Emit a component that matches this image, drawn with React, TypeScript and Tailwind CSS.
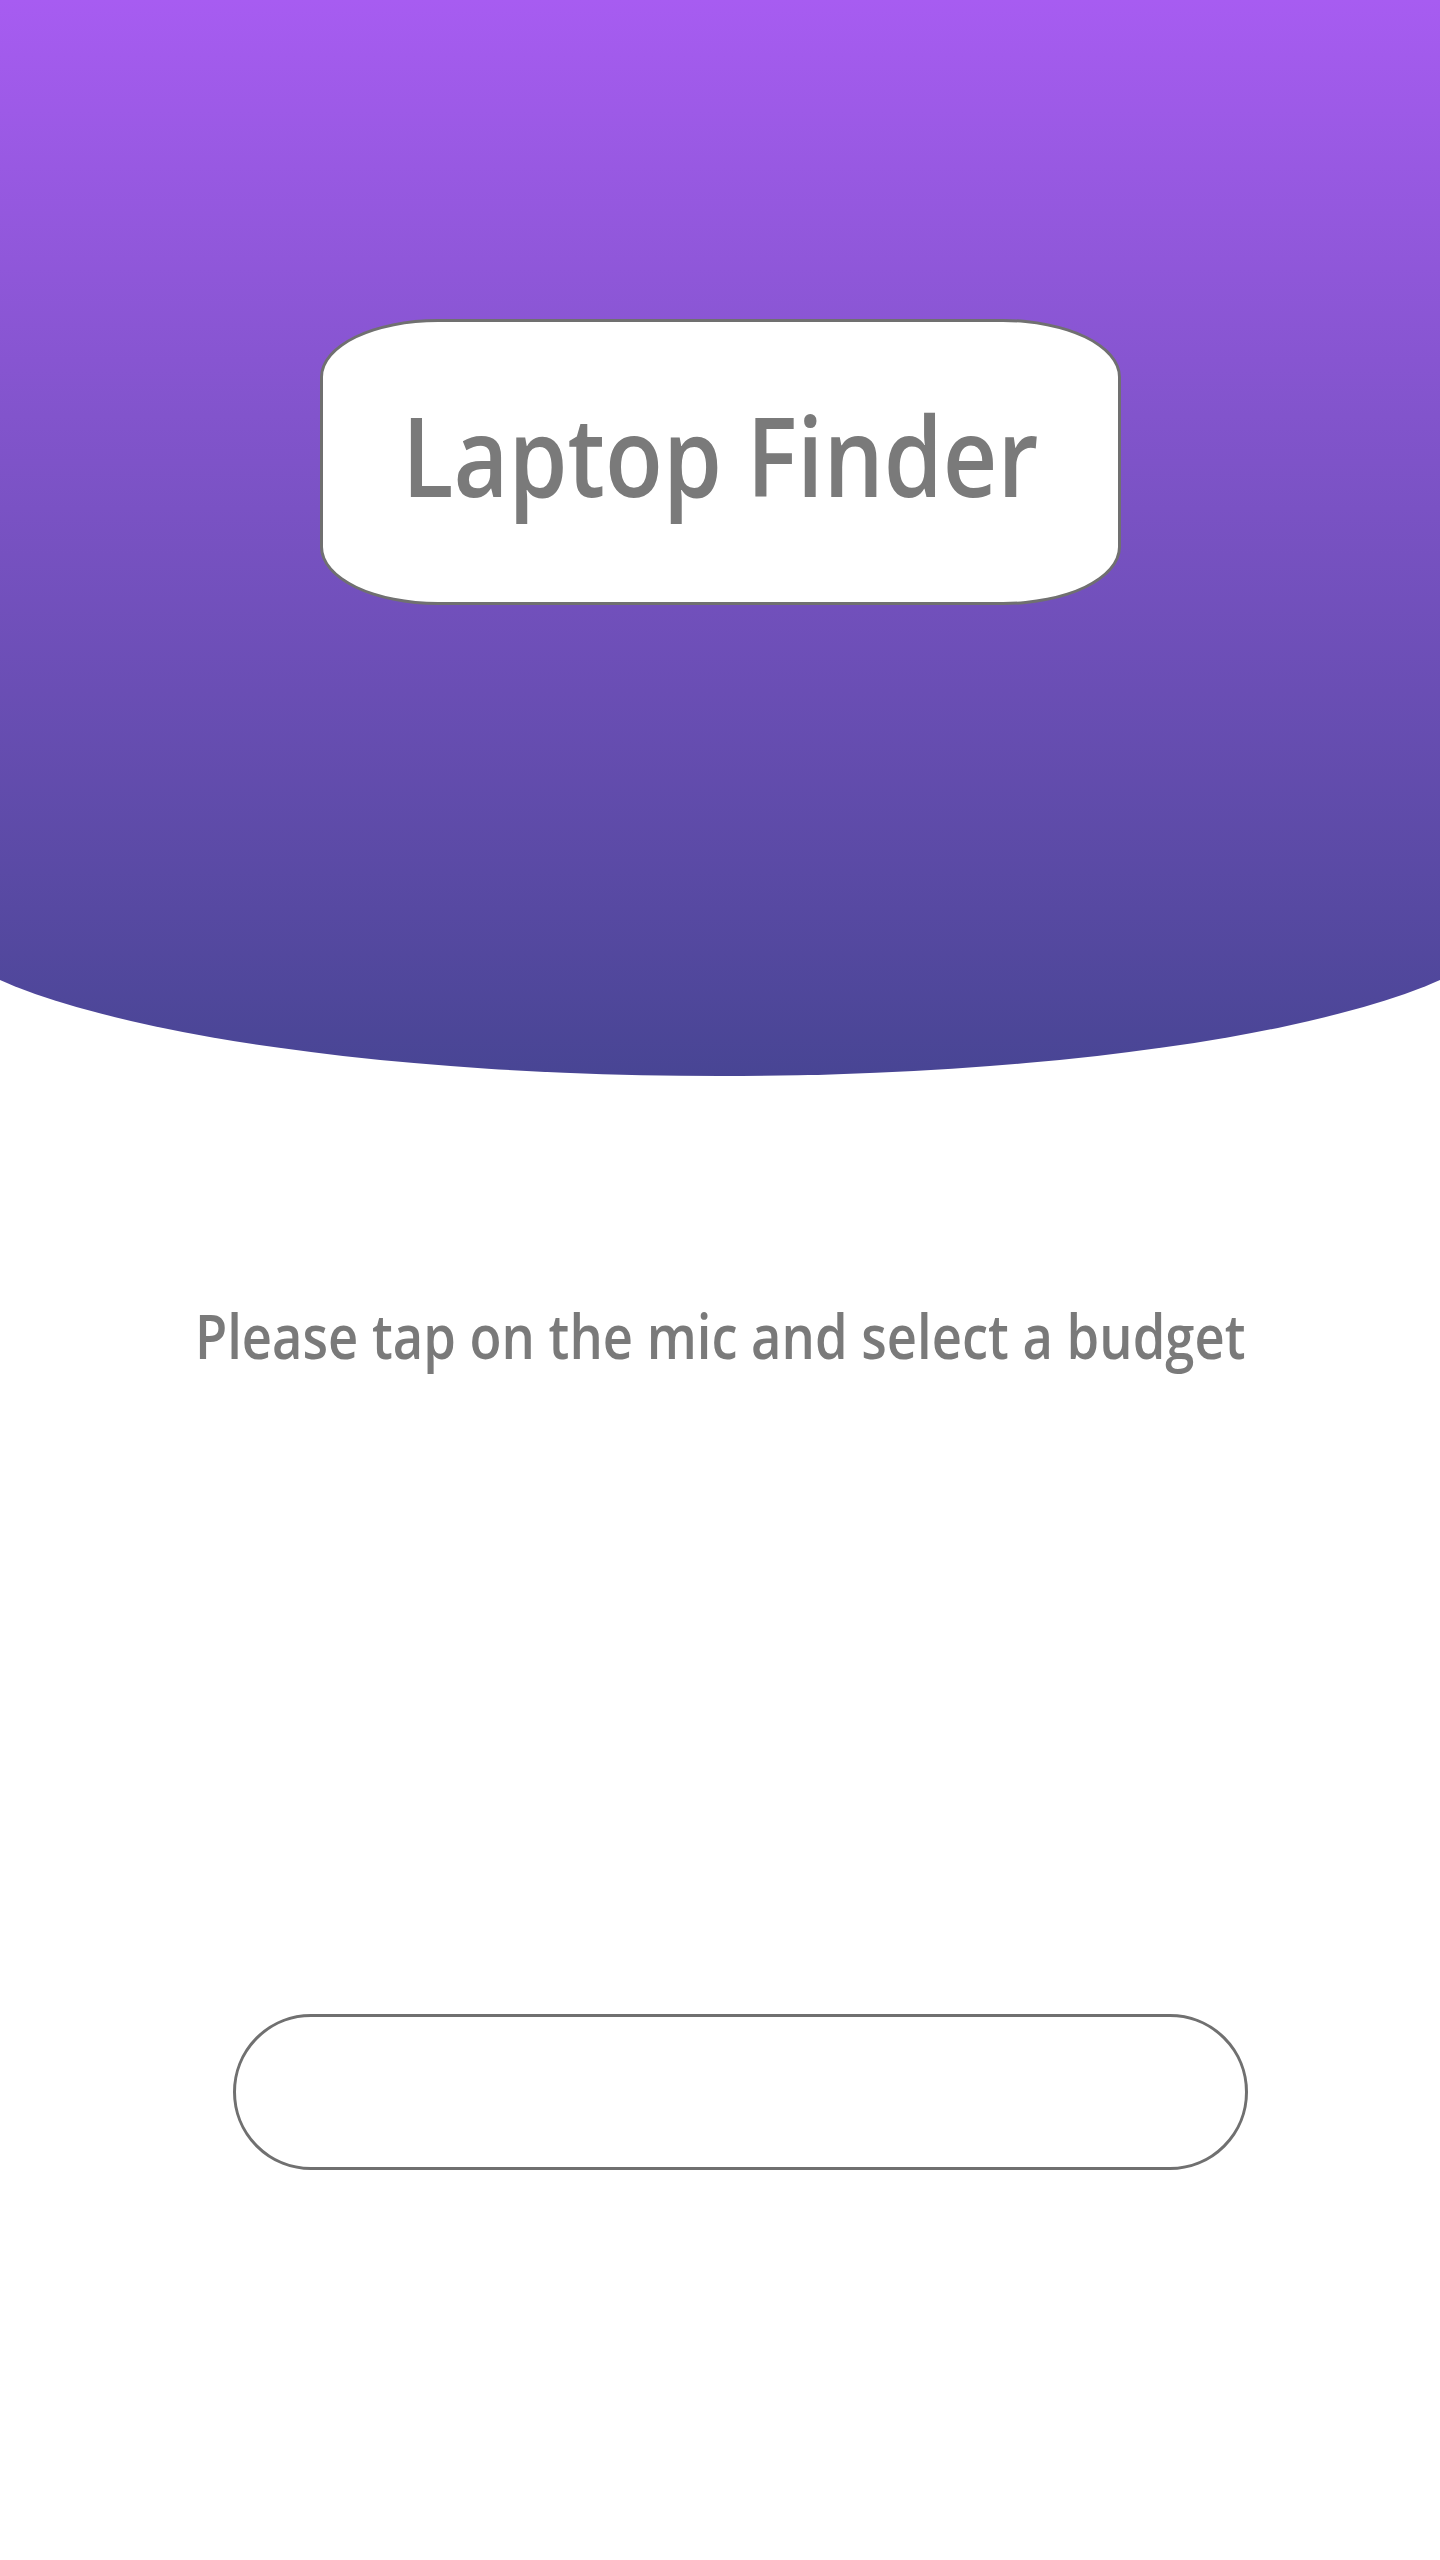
export default function App() {
  return (
    <div
      className="w-[1440px] h-[2560px] bg-white overflow-hidden flex flex-col items-center"
      style={{ fontFamily: '"Open Sans", "Noto Sans", sans-serif' }}
    >
      {/* purple header with curved bottom */}
      <header className="w-[1600px] shrink-0 h-[1076px] rounded-b-[800px_170px] bg-gradient-to-b from-[#a75cf1] to-[#484594] flex justify-center pt-[319px]">
        <div className="w-[801px] h-[286px] bg-white border-[3px] border-[#707070] rounded-[118px/58px] flex items-center justify-center pb-[16px]">
          <h1 className="text-[110px] leading-none text-[#7a7a7a] font-semibold whitespace-nowrap scale-x-[0.862]">
            Laptop Finder
          </h1>
        </div>
      </header>

      <p className="mt-[228px] text-[62px] leading-none text-[#7a7a7a] font-semibold whitespace-nowrap scale-x-[0.847]">
        Please tap on the mic and select a budget
      </p>

      <button className="mt-[648px] ml-[40px] w-[1015px] h-[156px] rounded-full border-[3px] border-[#707070] bg-white"></button>
    </div>
  );
}
